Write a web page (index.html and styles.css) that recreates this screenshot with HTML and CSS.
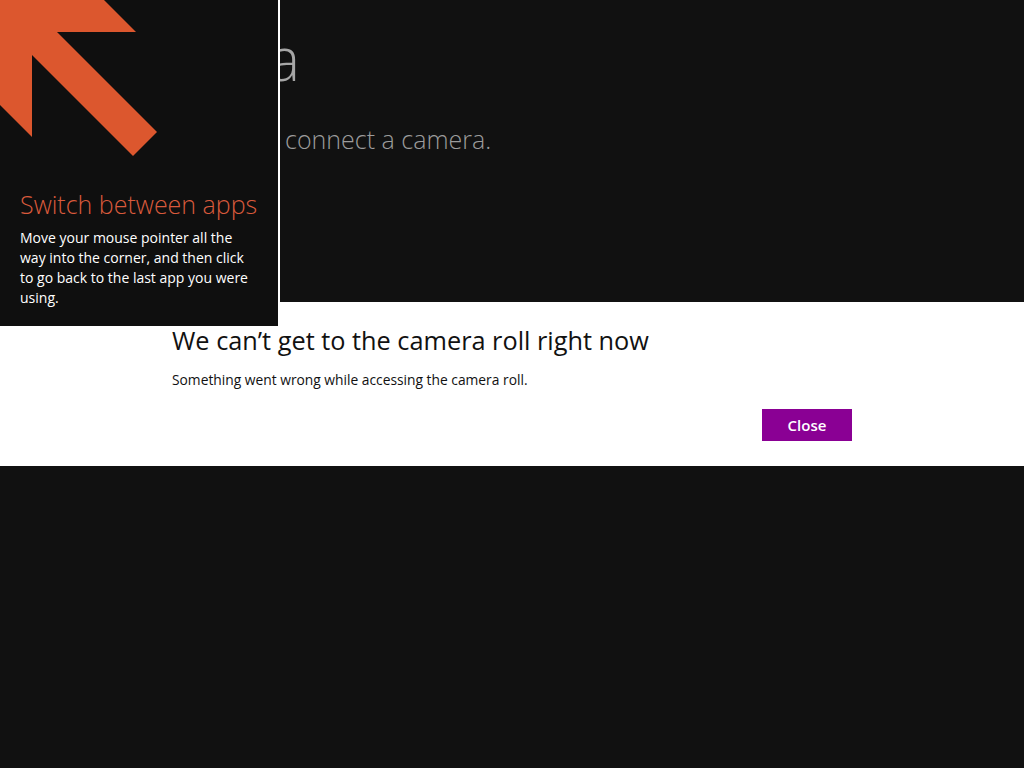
FILE: index.html
```html
<!DOCTYPE html>
<html lang="en">
<head>
    <meta charset="UTF-8">
    <meta name="viewport" content="width=device-width, initial-scale=1.0">
    <title>Camera</title>
    <link rel="stylesheet" href="styles.css">
</head>
<body>
    <!-- App behind the dialog -->
    <div class="app">
        <h1 class="app-title">Camera</h1>
        <p class="app-message">
            <span class="app-message-start">You need to</span>
            <span>connect a camera.</span>
        </p>
    </div>

    <!-- Error dialog -->
    <div class="dialog">
        <div class="dialog-inner">
            <h2>We can’t get to the camera roll right now</h2>
            <p>Something went wrong while accessing the camera roll.</p>
            <div class="dialog-actions">
                <button type="button">Close</button>
            </div>
        </div>
    </div>

    <!-- Corner tip -->
    <div class="tip">
        <svg class="tip-arrow" width="160" height="160" viewBox="0 0 160 160">
            <polygon points="0,0 104,0 136,32 57,32 157,132 133,156 32,55 32,137 0,105" fill="#dc572e"/>
        </svg>
        <div class="tip-text">
            <h3>Switch between apps</h3>
            <p>Move your mouse pointer all the way into the corner, and then click to go back to the last app you were using.</p>
        </div>
    </div>
</body>
</html>
```

FILE: styles.css
```css
/* Global */
body {
    margin: 0;
    background-color: #111111;
    font-family: 'Open Sans', 'Noto Sans', sans-serif;
    height: 768px;
    overflow: hidden;
    position: relative;
}

/* App page */
.app {
    padding: 18px 0 0 90px;
    color: #a6a6a6;
}

.app-title {
    margin: 0;
    font-size: 60px;
    font-weight: 300;
    line-height: 80px;
}

.app-message {
    display: flex;
    gap: 7px;
    margin: 24px 0 0 0;
    font-size: 25px;
    font-weight: 300;
    color: #9c9c9c;
}

.app-message-start {
    width: 188px;
    text-align: right;
}

/* Dialog */
.dialog {
    position: absolute;
    top: 302px;
    left: 0;
    right: 0;
    height: 164px;
    background-color: #ffffff;
    z-index: 1;
}

.dialog-inner {
    width: 680px;
    margin-left: 172px;
    padding-top: 20px;
}

.dialog h2 {
    margin: 0;
    font-size: 25.3px;
    font-weight: 400;
    line-height: 36px;
    color: #111111;
}

.dialog p {
    margin: 12px 0 0 0;
    font-size: 13.8px;
    line-height: 20px;
    color: #111111;
}

.dialog-actions {
    display: flex;
    justify-content: flex-end;
    margin-top: 19px;
}

.dialog button {
    width: 90px;
    height: 32px;
    border: none;
    background-color: #8a0094;
    color: white;
    font-family: inherit;
    font-size: 15px;
    font-weight: 600;
    cursor: pointer;
}

/* Corner tip */
.tip {
    position: absolute;
    top: 0;
    left: 0;
    width: 278px;
    height: 326px;
    background-color: #0f0f0f;
    border-right: 2px solid #ffffff;
    z-index: 2;
}

.tip-arrow {
    display: block;
}

.tip-text {
    padding: 26px 20px 0 20px;
}

.tip-text h3 {
    margin: 0;
    font-size: 25px;
    font-weight: 300;
    line-height: 36px;
    white-space: nowrap;
    color: #d95a3c;
}

.tip-text p {
    margin: 6px 0 0 0;
    font-size: 14px;
    line-height: 20px;
    color: #ffffff;
}
```
